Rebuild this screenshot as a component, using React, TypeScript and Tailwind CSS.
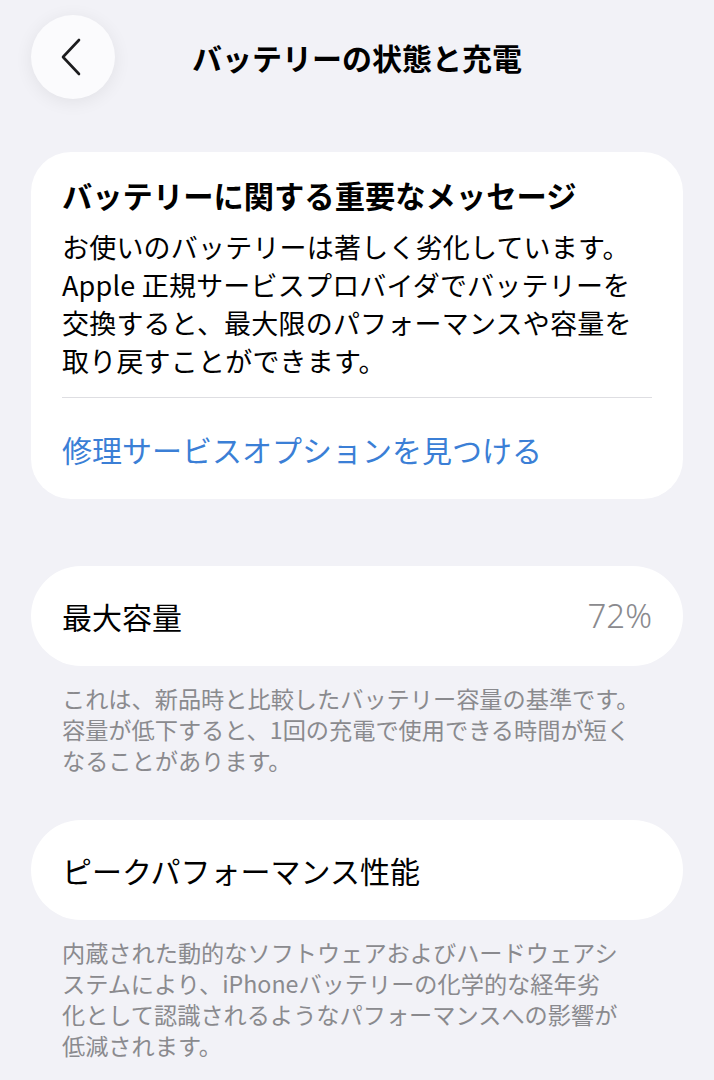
const font = {
  fontFamily: '"Noto Sans CJK JP", "Noto Sans", sans-serif',
};

function Footnote({ lines }: { lines: string[] }) {
  return (
    <p className="mt-[17px] px-[62px] text-[23.2px] leading-[31px] text-[#8a8a8e] whitespace-nowrap">
      {lines.map((l, i) => (
        <span key={i} className="block">
          {l}
        </span>
      ))}
    </p>
  );
}

export default function App() {
  return (
    <div className="min-h-screen bg-[#f2f2f7] text-black" style={font}>
      {/* nav bar */}
      <header className="grid grid-cols-[84px_1fr_84px] items-center px-[31px] pt-[15px]">
        <button className="flex h-[84px] w-[84px] items-center justify-center rounded-full bg-[#fbfbfd] shadow-[0_3px_18px_rgba(0,0,0,0.07)]">
          <svg width="22" height="38" viewBox="0 0 22 38" fill="none" className="-ml-[4px]">
            <polyline
              points="19,2 3,19 19,36"
              stroke="#1c1c1e"
              strokeWidth="2.6"
              strokeLinecap="round"
              strokeLinejoin="round"
            />
          </svg>
        </button>
        <h1 className="text-center text-[30px] font-bold leading-[40px]">
          バッテリーの状態と充電
        </h1>
        <div />
      </header>

      {/* important message */}
      <section className="mx-[31px] mt-[53px] rounded-[40px] bg-white px-[31px] pt-[23px]">
        <h2 className="text-[30.3px] font-bold leading-[40px]">
          バッテリーに関する重要なメッセージ
        </h2>
        <p className="mt-[13px] text-[27px] leading-[38px] tracking-[0.2px] whitespace-nowrap">
          <span className="block">お使いのバッテリーは著しく劣化しています。</span>
          <span className="block">Apple 正規サービスプロバイダでバッテリーを</span>
          <span className="block">交換すると、最大限のパフォーマンスや容量を</span>
          <span className="block">取り戻すことができます。</span>
        </p>
        <div className="mt-[17px] h-px bg-[#dedee2]" />
        <div className="flex h-[101px] items-center">
          <span className="text-[30px] leading-[40px] text-[#3b7fd6]">
            修理サービスオプションを見つける
          </span>
        </div>
      </section>

      {/* maximum capacity */}
      <section className="mx-[31px] mt-[67px] flex h-[100px] items-center justify-between rounded-full bg-white px-[31px]">
        <span className="text-[30px] leading-[40px]">最大容量</span>
        <span
          className="text-[33px] leading-[40px] text-[#8a8a8e]"
          style={{ fontFamily: '"Noto Sans", sans-serif', fontWeight: 300 }}
        >
          72%
        </span>
      </section>
      <Footnote
        lines={[
          "これは、新品時と比較したバッテリー容量の基準です。",
          "容量が低下すると、1回の充電で使用できる時間が短く",
          "なることがあります。",
        ]}
      />

      {/* peak performance */}
      <section className="mx-[31px] mt-[44px] flex h-[100px] items-center rounded-full bg-white px-[31px]">
        <span className="text-[30px] leading-[40px]">ピークパフォーマンス性能</span>
      </section>
      <div className="pb-10">
        <Footnote
          lines={[
            "内蔵された動的なソフトウェアおよびハードウェアシ",
            "ステムにより、iPhoneバッテリーの化学的な経年劣",
            "化として認識されるようなパフォーマンスへの影響が",
            "低減されます。",
          ]}
        />
      </div>
    </div>
  );
}
